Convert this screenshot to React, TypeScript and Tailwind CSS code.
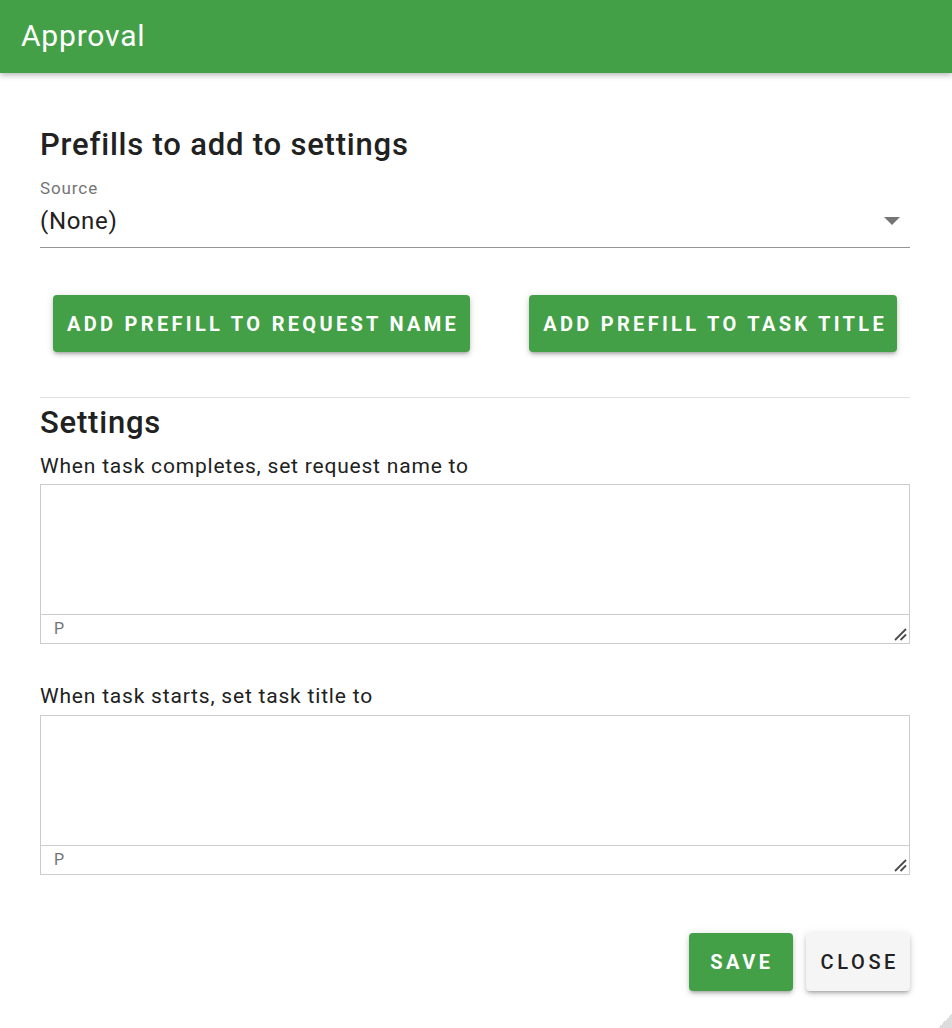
import React from "react";

function ResizeHandle() {
  return (
    <svg width="16" height="16" viewBox="0 0 16 16" className="absolute right-[1px] bottom-[1px]">
      <line x1="3" y1="14" x2="14" y2="3" stroke="#4a4a4a" strokeWidth="1.8" />
      <line x1="8.5" y1="14" x2="14" y2="8.5" stroke="#4a4a4a" strokeWidth="1.8" />
    </svg>
  );
}

function Editor() {
  return (
    <div className="border border-[#cccccc] h-[160px] flex flex-col">
      <div className="flex-1" />
      <div className="relative h-[29px] border-t border-[#cccccc] flex items-center pl-[13px] text-[16px] text-[#757575] leading-none">
        P
        <ResizeHandle />
      </div>
    </div>
  );
}

const shadow =
  "shadow-[0_3px_3px_-2px_rgba(0,0,0,0.2),0_3px_4px_0_rgba(0,0,0,0.14),0_1px_8px_0_rgba(0,0,0,0.12)]";

export default function App() {
  return (
    <div
      className="relative min-h-screen bg-white text-[#212121]"
      style={{ fontFamily: "Roboto, 'Noto Sans', Arial, sans-serif" }}
    >
      <header className="h-[73px] bg-[#43a047] flex items-center pl-[21px] shadow-[0_2px_6px_rgba(0,0,0,0.3)] relative z-10">
        <h1 className="text-white text-[30px] leading-[34px] tracking-[0.8px] pb-[2px]">Approval</h1>
      </header>

      <main className="px-[40px] pr-[42px]">
        <h2 className="mt-[55px] text-[31px] leading-[34px] font-medium tracking-[0.8px]">Prefills to add to settings</h2>

        <div className="mt-[16px] text-[17px] leading-[20px] tracking-[0.9px] text-[#757575]">Source</div>
        <div className="mt-[7px] h-[43px] border-b border-[#949494] flex justify-between pr-[10px]">
          <span className="text-[24px] leading-[32px] tracking-[0.7px]">(None)</span>
          <svg width="16" height="9" viewBox="0 0 16 9" className="mt-[12px]">
            <polygon points="0,0 16,0 8,8" fill="#757575" />
          </svg>
        </div>

        <div className="mt-[47px] px-[13px] flex justify-between">
          <button className={`h-[57px] pl-[14px] pr-[11px] rounded-[4px] bg-[#43a047] text-white text-[20px] font-bold tracking-[3.3px] uppercase ${shadow}`}>
            Add prefill to request name
          </button>
          <button className={`h-[57px] pl-[14px] pr-[10px] rounded-[4px] bg-[#43a047] text-white text-[20px] font-bold tracking-[3.3px] uppercase ${shadow}`}>
            Add prefill to task title
          </button>
        </div>

        <div className="mt-[45px] h-px bg-[#e0e0e0]" />

        <h2 className="mt-[8px] text-[31px] leading-[34px] font-medium tracking-[0.8px]">Settings</h2>
        <div className="mt-[12px] text-[21px] leading-[28px] tracking-[0.8px]">When task completes, set request name to</div>
        <div className="mt-[4px]">
          <Editor />
        </div>

        <div className="mt-[38px] text-[21px] leading-[28px] tracking-[0.8px]">When task starts, set task title to</div>
        <div className="mt-[5px]">
          <Editor />
        </div>

        <div className="mt-[58px] flex justify-end gap-[13px]">
          <button className={`h-[58px] pl-[21px] pr-[19px] rounded-[4px] bg-[#43a047] text-white text-[20px] font-bold tracking-[3.5px] ${shadow}`}>
            SAVE
          </button>
          <button className={`h-[58px] pl-[15px] pr-[11px] rounded-[4px] bg-[#f5f5f5] text-[#212121] text-[20px] font-medium tracking-[3.6px] ${shadow}`}>
            CLOSE
          </button>
        </div>
      </main>

      <div className="absolute right-0 bottom-0 w-[14px] h-[14px] bg-[linear-gradient(135deg,transparent_50%,#dcdcdc_50%)]" />
    </div>
  );
}
